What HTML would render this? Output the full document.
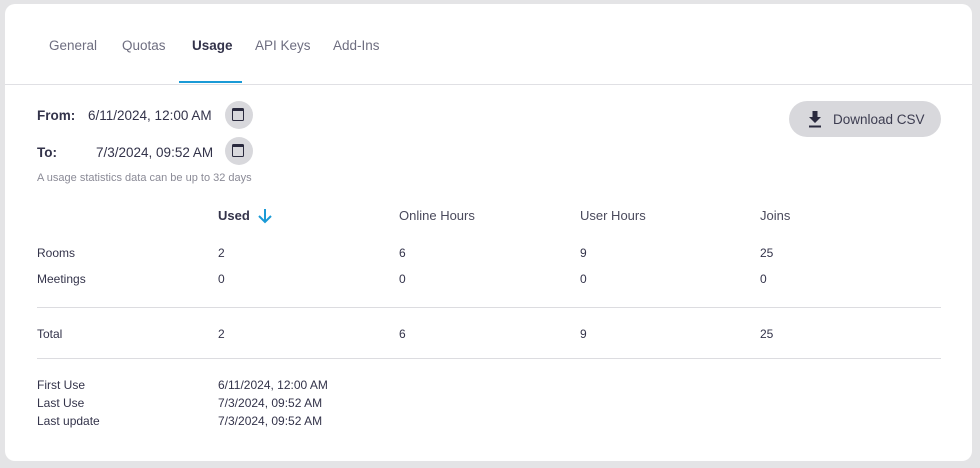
<!DOCTYPE html><html><head><style>
body{margin:0;width:980px;height:468px;background:#e4e4e6;font-family:"Liberation Sans",sans-serif;color:#33334a;position:relative;overflow:hidden}
.card{position:absolute;left:5px;top:4px;width:967px;height:457px;background:#fff;border-radius:10px}
.a{position:absolute;white-space:nowrap}
.tab{top:38px;font-size:13.5px;color:#6e6e80}
.s{font-size:12px;color:#33334a}
.h{font-size:13px;color:#4a4a5c}
.cal{position:absolute;width:28px;height:28px;border-radius:50%;background:#d8d8dc}
.cal:after{content:"";position:absolute;left:7px;top:7px;width:10px;height:9px;border:1.8px solid #2a2a3e;border-top-width:3.5px;border-radius:1.5px}
.line{position:absolute;left:37px;width:904px;height:1px;background:#dcdce0}
</style></head><body><div class="card"></div>
<div class="a tab" style="left:49px">General</div>
<div class="a tab" style="left:122px">Quotas</div>
<div class="a tab" style="left:192px;color:#33334a;font-weight:bold">Usage</div>
<div class="a tab" style="left:255px">API Keys</div>
<div class="a tab" style="left:333px">Add-Ins</div>
<div class="a" style="left:179px;top:81px;width:63px;height:2px;background:#1a9ad6"></div>
<div class="a" style="left:5px;top:84px;width:967px;height:1px;background:#e0e0e4"></div>
<div class="a" style="left:37px;top:108px;font-size:13.5px;font-weight:bold;color:#33334a">From:</div>
<div class="a" style="left:88px;top:108px;font-size:13.5px">6/11/2024, 12:00 AM</div>
<div class="cal" style="left:225px;top:101px"></div>
<div class="a" style="left:37px;top:145px;font-size:13.5px;font-weight:bold">To:</div>
<div class="a" style="left:96px;top:145px;font-size:13.5px">7/3/2024, 09:52 AM</div>
<div class="cal" style="left:225px;top:137px"></div>
<div class="a" style="left:37px;top:172px;font-size:11px;color:#8a8a96">A usage statistics data can be up to 32 days</div>
<div class="a" style="left:789px;top:101px;width:152px;height:36px;border-radius:18px;background:#d8d8dc"></div>
<svg class="a" style="left:807px;top:110px" width="16" height="18" viewBox="0 0 16 18"><path d="M5.5 1h5v6h3.5L8 13 2 7h3.5z M2 15.5h12v2H2z" fill="#2a2a3e"/></svg>
<div class="a" style="left:833px;top:112px;font-size:13.5px;color:#3c3c50">Download CSV</div>
<div class="a h" style="left:218px;top:208px;font-weight:bold;color:#33334a">Used</div>
<svg class="a" style="left:257px;top:207px" width="16" height="18" viewBox="0 0 16 18"><path d="M8 2v13M2 9l6 6 6-6" stroke="#1a9ad6" stroke-width="2" fill="none"/></svg>
<div class="a h" style="left:399px;top:208px">Online Hours</div>
<div class="a h" style="left:580px;top:208px">User Hours</div>
<div class="a h" style="left:760px;top:208px">Joins</div>
<div class="a s" style="left:37px;top:246px">Rooms</div><div class="a s" style="left:218px;top:246px">2</div><div class="a s" style="left:399px;top:246px">6</div><div class="a s" style="left:580px;top:246px">9</div><div class="a s" style="left:760px;top:246px">25</div>
<div class="a s" style="left:37px;top:272px">Meetings</div><div class="a s" style="left:218px;top:272px">0</div><div class="a s" style="left:399px;top:272px">0</div><div class="a s" style="left:580px;top:272px">0</div><div class="a s" style="left:760px;top:272px">0</div>
<div class="line" style="top:307px"></div>
<div class="a s" style="left:37px;top:327px">Total</div><div class="a s" style="left:218px;top:327px">2</div><div class="a s" style="left:399px;top:327px">6</div><div class="a s" style="left:580px;top:327px">9</div><div class="a s" style="left:760px;top:327px">25</div>
<div class="line" style="top:358px"></div>
<div class="a s" style="left:37px;top:378px">First Use</div><div class="a s" style="left:218px;top:378px">6/11/2024, 12:00 AM</div>
<div class="a s" style="left:37px;top:396px">Last Use</div><div class="a s" style="left:218px;top:396px">7/3/2024, 09:52 AM</div>
<div class="a s" style="left:37px;top:414px">Last update</div><div class="a s" style="left:218px;top:414px">7/3/2024, 09:52 AM</div>
</body></html>
